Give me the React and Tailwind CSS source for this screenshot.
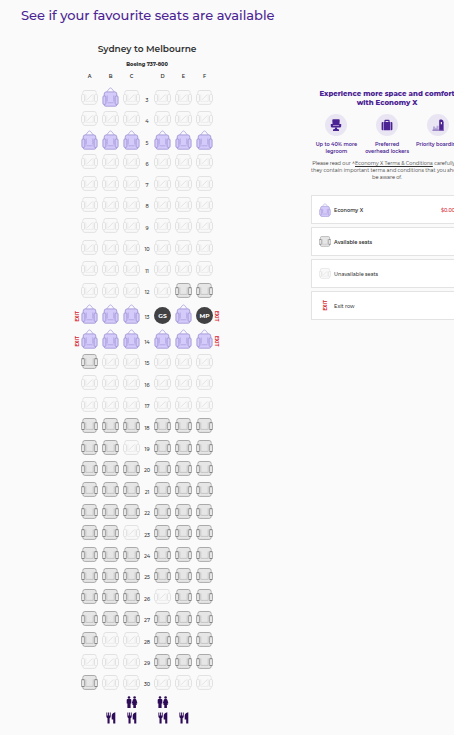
import React from "react";

const ROWS = [
  [3, "UPUUUU"],
  [4, "UUUUUU"],
  [5, "PPPPPP"],
  [6, "UUUUUU"],
  [7, "UUUUUU"],
  [8, "UUUUUU"],
  [9, "UUUUUU"],
  [10, "UUUUUU"],
  [11, "UUUUUU"],
  [12, "UUUUAA"],
  [13, "PPPGPM"],
  [14, "PPPPPP"],
  [15, "AUUUUU"],
  [16, "UUUUUU"],
  [17, "UUUUUU"],
  [18, "AAAAAA"],
  [19, "AAUAAA"],
  [20, "AAAAAA"],
  [21, "AAAAAA"],
  [22, "AAAAAA"],
  [23, "AAUAAA"],
  [24, "AAAAAA"],
  [25, "AAAAAA"],
  [26, "AAAUAA"],
  [27, "AAAAAA"],
  [28, "AUUAAA"],
  [29, "UUUAAA"],
  [30, "AUUUUU"],
];

const GRID = "grid grid-cols-[8px_21px_21px_21px_10px_21px_21px_21px_8px] justify-center";
const LETTERS = ["A", "B", "C", "D", "E", "F"];

function Seat({ kind, small }) {
  if (kind === "P") {
    return (
      <svg viewBox="0 0 17 20" className={"block " + (small ? "h-[14px] w-3" : "h-5 w-[17px]")} aria-hidden="true">
        <path d="M4.6 5L7.5 1.4Q8.5 .5 9.5 1.4L12.4 5" fill="#faf9ff" stroke="#aba2dc" strokeWidth="0.8" />
        <g stroke="#9a8fd2" fill="#d5cbfa" strokeWidth="0.8">
          <path d="M2.2 17.8V7Q2.2 4.9 4.3 4.9H12.7Q14.8 4.9 14.8 7V17.8Q14.8 19.2 13.4 19.2H3.6Q2.2 19.2 2.2 17.8Z" />
          <path d="M5.2 8.5V14.5M11.8 8.5V14.5M5.5 15.8H11.5" fill="none" strokeWidth="0.6" />
          <rect x="0.9" y="9" width="3" height="8.4" rx="1" />
          <rect x="13.1" y="9" width="3" height="8.4" rx="1" />
        </g>
      </svg>
    );
  }
  const free = kind === "A";
  return (
    <svg viewBox="0 0 17 15" className={"block " + (small ? "h-[11px] w-3" : "h-[15px] w-[17px]")} aria-hidden="true">
      <g stroke={free ? "#989898" : "#dcdcdc"} fill={free ? "#e6e6e6" : "#f9f9f9"} strokeWidth="0.8">
        <path d="M1.9 4.6V2.4Q1.9 .5 3.8 .5H13.2Q15.1 .5 15.1 2.4V4.6" />
        <path d="M1.9 11.6V12.6Q1.9 14.4 3.7 14.4H13.3Q15.1 14.4 15.1 12.6V11.6" />
        <rect x="2.6" y="2" width="11.8" height="11" stroke="none" />
        <path d="M4.8 4.4V11.4H12.2V4.4" fill="none" stroke={free ? "#b8b8b8" : "#e6e6e6"} strokeWidth="0.7" />
        <rect x="0.5" y="4.6" width="3" height="7" rx="0.9" />
        <rect x="13.5" y="4.6" width="3" height="7" rx="0.9" />
        {!free && <path d="M6 9.8L11.2 4.6" fill="none" />}
        {free && <path d="M.6 4.7H3.4M.6 11.5H3.4M13.6 4.7H16.4M13.6 11.5H16.4" stroke="#777" />}
      </g>
    </svg>
  );
}

function SeatCell({ kind, label }) {
  if (kind === "G" || kind === "M") {
    return (
      <button
        aria-label={label}
        className="flex size-[17px] items-center justify-center rounded-full bg-[#414144] text-[6px] leading-none font-bold text-white"
      >
        {kind === "G" ? "GS" : "MP"}
      </button>
    );
  }
  return (
    <button aria-label={label} disabled={kind === "U"} className="block">
      <Seat kind={kind} />
    </button>
  );
}

function Exit({ flip }) {
  return (
    <span
      className={
        "font-['Roboto',sans-serif] text-[5px] leading-[4px] font-bold text-[#d8232f] [writing-mode:vertical-rl] " +
        (flip ? "" : "rotate-180")
      }
    >
      EXIT
    </span>
  );
}

function SeatRow({ number, seats, index }) {
  const exit = number === 13 || number === 14;
  const step = number > 14 ? index - 12 : index;
  const height = exit ? "h-[25px]" : step % 5 === 1 || step % 5 === 3 ? "h-[22px]" : "h-[21px]";
  const cells = seats.split("").map((kind, i) => (
    <div key={i} className={"flex justify-center " + ("UA".includes(kind) ? "self-start pt-[3px]" : "pb-[2px]")}>
      <SeatCell kind={kind} label={"Seat " + number + LETTERS[i]} />
    </div>
  ));
  return (
    <div className={GRID + " items-end " + height}>
      <div className="flex justify-end pb-[5px]">{exit && <Exit />}</div>
      {cells.slice(0, 3)}
      <div className="pb-1 text-center text-[5px] leading-[10px] font-medium text-[#333]">{number}</div>
      {cells.slice(3)}
      <div className="flex justify-start pb-[5px]">{exit && <Exit flip />}</div>
    </div>
  );
}

function Toilets() {
  return (
    <svg viewBox="0 0 12 12" className="h-3 w-3" fill="#2d0b57" role="img" aria-label="Toilets">
      <circle cx="3" cy="1.5" r="1.3" />
      <path d="M1.6 3H4.4Q5.3 3 5.3 4V7.6H4.6V11.9H1.4V7.6H.7V4Q.7 3 1.6 3Z" />
      <circle cx="8.6" cy="1.5" r="1.3" />
      <path d="M7.7 3H9.5Q10.1 3 10.4 4L11.4 7.2L10.5 7.6L10.8 9H9.9V11.9H7.3V9H6.4L6.7 7.6L5.8 7.2L6.8 4Q7.1 3 7.7 3Z" />
    </svg>
  );
}

function Galley() {
  return (
    <svg viewBox="0 0 12 12" className="h-3 w-3" fill="#2d0b57" role="img" aria-label="Galley">
      <path d="M1.4 .4H2.3V3.6H3.1V.4H4V3.6H4.8V.4H5.7V4.6Q5.7 5.8 4.6 6.3V11.6H2.5V6.3Q1.4 5.8 1.4 4.6Z" />
      <path d="M10.3 .3V11.6H8.2V7.6H6.7V3.8Q6.9 .8 10.3 .3Z" />
    </svg>
  );
}

function LegroomIcon() {
  return (
    <svg viewBox="0 0 12 12" className="size-3" fill="#4b2393" aria-hidden="true">
      <path d="M3.2 .2H8.8Q9.8 .2 9.7 1.2L9.4 6.2H2.6L2.3 1.2Q2.2 .2 3.2 .2Z" />
      <path d="M.8 5H3V6.8H9V5H11.2V7.2Q11.2 8.6 9.8 8.6H2.2Q.8 8.6 .8 7.2Z" />
      <path d="M5 8.4H7V9.8L9 10.6V11.9H3V10.6L5 9.8Z" />
    </svg>
  );
}

function BagIcon() {
  return (
    <svg viewBox="0 0 12 12" className="size-3" fill="#4b2393" aria-hidden="true">
      <path d="M3.4 3V1.8Q3.4 .8 4.4 .8H7.6Q8.6 .8 8.6 1.8V3H9.1V11.2H2.9V3ZM4.6 3H7.4V2H4.6Z" fillRule="evenodd" />
      <path d="M2.4 3V11.2H1.6Q.6 11.2 .6 10.2V4Q.6 3 1.6 3ZM9.6 3V11.2H10.4Q11.4 11.2 11.4 10.2V4Q11.4 3 10.4 3Z" />
    </svg>
  );
}

function BoardingIcon() {
  return (
    <svg viewBox="0 0 14 12" className="h-3 w-3.5" aria-hidden="true">
      <path d="M8.2 11.6V1.8Q8.2 .6 9.4 .6H10.6Q12.6 1.4 12.6 3.4V11.6Z" fill="#4b2393" />
      <path d="M9.8 3H11V5.2H9.8Z" fill="#e9e5f3" />
      <path d="M2 7.6H4V8.8H5.6V6.8H7.6V11.2H2Z" fill="#b7a9d8" />
      <path d="M1.4 11.2H13" stroke="#6d4daa" strokeWidth="0.8" />
    </svg>
  );
}

function Benefit({ icon, children }) {
  return (
    <li className="flex w-[52px] flex-col items-center">
      <span className="flex size-[22px] items-center justify-center rounded-full bg-[#e9e5f3]">{icon}</span>
      <span className="mt-[5px] text-center text-[5px] leading-[7px] font-semibold whitespace-nowrap text-[#4b2393]">
        {children}
      </span>
    </li>
  );
}

function Legend({ icon, label, price, strong }) {
  return (
    <li className="flex h-[29px] items-center border border-[#e3e3e3] bg-white px-[7px]">
      <span className="flex w-3 justify-center">{icon}</span>
      <span className={"ml-[3px] flex-1 text-[5px] leading-2 text-[#333] " + (strong ? "font-semibold" : "font-medium")}>
        {label}
      </span>
      {price && <span className="text-[5px] leading-2 font-medium text-[#d8232f]">{price}</span>}
    </li>
  );
}

export default function App() {
  return (
    <main className="min-h-screen overflow-hidden bg-[#fafafa] pt-[7px] pb-2 font-['Montserrat','Inter',sans-serif]">
      <h1 className="ml-[21px] text-[13px] leading-4 font-medium whitespace-nowrap text-[#4b2393]">
        See if your favourite seats are available
      </h1>
      <div className="flex gap-4">
        <section className="w-[65%] shrink-0 pt-5 pr-px">
          <h2 className="text-center text-[9px] leading-3 font-semibold text-[#333]">Sydney to Melbourne</h2>
          <p className="mt-[5px] text-center text-[5px] leading-2 font-extrabold text-[#333]">Boeing 737-800</p>
          <div className={GRID + " mt-1 pb-[7px] text-center text-[5px] leading-2 font-semibold text-[#333]"}>
            <span />
            <span>A</span>
            <span>B</span>
            <span>C</span>
            <span />
            <span>D</span>
            <span>E</span>
            <span>F</span>
          </div>
          {ROWS.map(([number, seats], i) => (
            <SeatRow key={number} number={number} seats={seats} index={i} />
          ))}
          <div className={GRID + " mt-[3px] justify-items-center gap-y-1"}>
            <div className="col-start-4">
              <Toilets />
            </div>
            <div className="col-start-6">
              <Toilets />
            </div>
            <div className="col-start-3">
              <Galley />
            </div>
            <div className="col-start-4">
              <Galley />
            </div>
            <div className="col-start-6">
              <Galley />
            </div>
            <div className="col-start-7">
              <Galley />
            </div>
          </div>
        </section>
        <aside className="w-[152px] shrink-0 pt-[66px]">
          <h2 className="text-center text-[7px] leading-[9px] font-extrabold whitespace-nowrap text-[#4b2393]">
            Experience more space and comfort
            <br />
            with Economy X
          </h2>
          <ul className="mt-[7px] flex justify-center">
            <Benefit icon={<LegroomIcon />}>
              Up to 40% more
              <br />
              legroom
            </Benefit>
            <Benefit icon={<BagIcon />}>
              Preferred
              <br />
              overhead lockers
            </Benefit>
            <Benefit icon={<BoardingIcon />}>Priority boarding</Benefit>
          </ul>
          <p className="mt-[5px] text-center text-[5px] leading-[7px] whitespace-nowrap text-[#333]">
            Please read our ^
            <a href="#terms" className="underline">
              Economy X Terms &amp; Conditions
            </a>{" "}
            carefully as
            <br />
            they contain important terms and conditions that you should
            <br />
            be aware of.
          </p>
          <ul className="mt-[14px] flex flex-col gap-[3px]">
            <Legend icon={<Seat kind="P" small />} label="Economy X" price="$0.00" strong />
            <Legend icon={<Seat kind="A" small />} label="Available seats" strong />
            <Legend icon={<Seat kind="U" small />} label="Unavailable seats" />
            <Legend icon={<Exit />} label="Exit row" />
          </ul>
        </aside>
      </div>
    </main>
  );
}
